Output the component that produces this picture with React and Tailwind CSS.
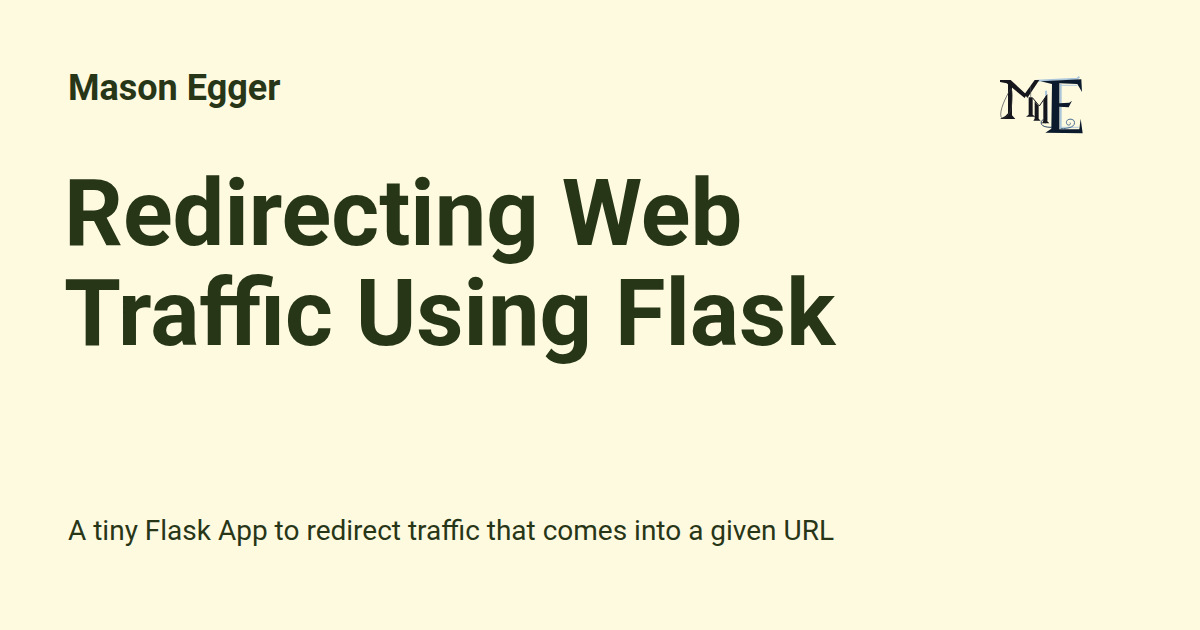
function Logo() {
  return (
    <svg width="100" height="70" viewBox="0 0 300 210" className="shrink-0" fill="none">
      {/* light blue shadow behind the E */}
      <path d="M140 32 L262 26 L268 20 M168 62 L170 150 M212 42 L212 176" stroke="#8fb4d8" strokeWidth="6" opacity="0.75" />
      <path d="M214 46 L262 46 M214 172 L266 172" stroke="#8fb4d8" strokeWidth="3" opacity="0.7" />
      {/* E */}
      <path d="M152 34 L274 28 L276 66 L262 42 L208 40 L208 100 L238 98 L246 92 L236 112 L208 110 L208 178 L268 178 L272 146 L278 190 L166 188 L184 176 L186 42 Z" fill="#0b1a2c" />
      <path d="M212 176 C236 176 260 170 252 152 C242 142 222 150 232 164 C238 168 244 162 240 158" stroke="#4c6f92" strokeWidth="3" />
      <path d="M186 172 C170 172 150 170 154 154 C158 146 170 150 166 160" stroke="#24415f" strokeWidth="3" />
      {/* big M */}
      <path d="M30 30 L62 30 L110 74 L104 84 L50 40 L30 36 Z" fill="#15171c" />
      <path d="M54 38 L66 48 L66 136 L76 147 L30 147 L46 138 L54 130 Z" fill="#15171c" />
      <path d="M104 72 L134 30 L148 30 L112 84 Z" fill="#15171c" />
      <path d="M116 82 L128 82 L128 134 L136 140 L108 140 L116 134 Z" fill="#15171c" />
      <path d="M122 48 L122 82" stroke="#54585c" strokeWidth="2" />
      <path d="M62 56 C46 84 28 122 33 140 C40 154 60 138 64 110 C68 84 68 60 62 56 Z" stroke="#3a3d3f" strokeWidth="2" />
      {/* small m */}
      <path d="M128 84 L148 108 L170 76" stroke="#15171c" strokeWidth="3" />
      <path d="M134 94 L146 108 L146 146 L152 152 L130 152 L134 146 Z" fill="#15171c" />
      <path d="M160 92 L172 72 L172 154 L178 160 L156 160 L160 152 Z" fill="#15171c" />
    </svg>
  )
}

export default function App() {
  return (
    <div className="w-[1200px] h-[630px] bg-[#fefae0] text-[#283618] font-['Roboto',sans-serif] flex flex-col pl-[68px] pr-[110px] overflow-hidden">
      <div className="flex items-start justify-between">
        <p className="mt-[66px] text-[36px] leading-[44px] font-bold">Mason Egger</p>
        <div className="mt-[70px]"><Logo /></div>
      </div>
      <h1 className="mt-[24px] text-[92px] leading-[100px] font-bold ml-[-4px]">
        Redirecting Web
        <br />
        Traffic Using Flask
      </h1>
      <p className="mt-[151px] text-[28px] leading-[32px]">A tiny Flask App to redirect traffic that comes into a given URL</p>
    </div>
  )
}
